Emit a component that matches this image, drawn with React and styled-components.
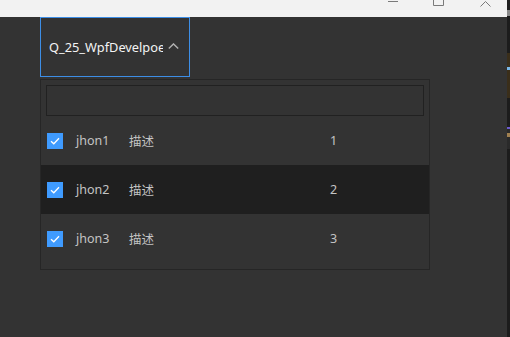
import React from "react";
import styled, { createGlobalStyle } from "styled-components";

const GlobalStyle = createGlobalStyle`
  html, body {
    margin: 0;
    padding: 0;
    background: #333333;
    overflow: hidden;
  }
  body {
    font-family: "Noto Sans", "Open Sans", "Noto Sans CJK SC", sans-serif;
  }
`;

const items = [
  { name: "jhon1", desc: "描述", value: 1 },
  { name: "jhon2", desc: "描述", value: 2 },
  { name: "jhon3", desc: "描述", value: 3 },
];

const App = () => {
  return (
    <Screen>
      <GlobalStyle />
      <Window>
        <TitleBar>
          <Control $left={388}>
            <svg width="10" height="3" viewBox="0 0 10 3">
              <line x1="0" y1="1.5" x2="10" y2="1.5" stroke="#7a7a7a" strokeWidth="1" />
            </svg>
          </Control>
          <Control $left={35}>
            <svg width="11" height="6" viewBox="0 0 11 6">
              <path d="M0.5 0 V5.5 H10.5 V0" fill="none" stroke="#7a7a7a" strokeWidth="1" />
            </svg>
          </Control>
          <Control $left={36}>
            <svg width="11" height="7" viewBox="0 0 11 7">
              <path d="M0.5 6.5 L5.5 1.5 L10.5 6.5" fill="none" stroke="#7a7a7a" strokeWidth="1" />
            </svg>
          </Control>
        </TitleBar>
        <Body>
          <ComboBox>
            <ComboText>Q_25_WpfDevelpoer</ComboText>
            <Chevron>
              <svg width="11" height="6" viewBox="0 0 11 6">
                <path d="M0.8 5.4 L5.5 0.9 L10.2 5.4" fill="none" stroke="#b0b0b0" strokeWidth="1.4" />
              </svg>
            </Chevron>
          </ComboBox>
          <Popup>
            <SearchBox />
            {items.map((t, index) => (
              <Row key={index} $alt={index === 1}>
                <CheckBox>
                  <svg width="10" height="8" viewBox="0 0 10 8">
                    <path d="M1 4.2 L3.8 6.8 L9 1.2" fill="none" stroke="#ffffff" strokeWidth="1.3" />
                  </svg>
                </CheckBox>
                <Cell>{t.name}</Cell>
                <Cell>{t.desc}</Cell>
                <Cell>{t.value}</Cell>
              </Row>
            ))}
          </Popup>
        </Body>
      </Window>
      <Edge>
        <EdgeBlock $h={10} $c="#202020" />
        <EdgeBlock $h={6} $c="#8a8a8a" />
        <EdgeBlock $h={37} $c="#1c1c1c" />
        <EdgeBlock $h={14} $c="#3a2e1a" />
        <EdgeBlock $h={3} $c="#7ab8e8" />
        <EdgeBlock $h={28} $c="#3a2e1a" />
        <EdgeBlock $h={29} $c="#1c1c1c" />
        <EdgeBlock $h={2} $c="#6a5acd" />
        <EdgeBlock $h={4} $c="#2a2a2a" />
        <EdgeBlock $h={4} $c="#a08050" />
        <EdgeBlock $h={12} $c="#2a2a2a" />
        <EdgeBlock $h={188} $c="#1c1c1c" />
      </Edge>
    </Screen>
  );
};

export default App;

export const Screen = styled.div`
  display: flex;
  width: 510px;
  height: 337px;
`;

export const Window = styled.div`
  display: flex;
  flex-direction: column;
  width: 507px;
  background-color: #333333;
`;

export const TitleBar = styled.div`
  display: flex;
  align-items: flex-start;
  height: 17px;
  background-color: #f2f2f2;
`;

export const Control = styled.div`
  display: flex;
  margin-left: ${(p) => p.$left}px;
  line-height: 0;
`;

export const Body = styled.div`
  display: flex;
  flex-direction: column;
  align-items: flex-start;
  padding-left: 40px;
`;

export const ComboBox = styled.div`
  display: flex;
  align-items: center;
  box-sizing: border-box;
  width: 150px;
  height: 60px;
  border: 1px solid #3d8ee6;
  padding-left: 8px;
  gap: 5px;
`;

export const ComboText = styled.div`
  flex: none;
  width: 114px;
  overflow: hidden;
  white-space: nowrap;
  color: #f4f4f4;
  font-size: 12.8px;
`;

export const Chevron = styled.div`
  display: flex;
  width: 11px;
  margin-bottom: 3px;
`;

export const Popup = styled.div`
  display: flex;
  flex-direction: column;
  box-sizing: border-box;
  width: 390px;
  height: 191px;
  margin-top: 2px;
  border: 1px solid #262626;
  background-color: #333333;
`;

export const SearchBox = styled.div`
  box-sizing: border-box;
  height: 31px;
  margin: 5px 5px 0 5px;
  border: 1px solid #212121;
`;

export const Row = styled.div`
  display: grid;
  grid-template-columns: 29px 53px 201px 1fr;
  align-items: center;
  height: 49px;
  padding-left: 6px;
  background-color: ${(p) => (p.$alt ? "#1f1f1f" : "transparent")};
`;

export const CheckBox = styled.div`
  display: flex;
  align-items: center;
  justify-content: center;
  width: 16px;
  height: 16px;
  background-color: #3f9bff;
`;

export const Cell = styled.div`
  color: #c4c4c4;
  font-size: 12.5px;
  white-space: nowrap;
`;

export const Edge = styled.div`
  display: flex;
  flex-direction: column;
  width: 3px;
`;

export const EdgeBlock = styled.div`
  height: ${(p) => p.$h}px;
  background-color: ${(p) => p.$c};
`;
